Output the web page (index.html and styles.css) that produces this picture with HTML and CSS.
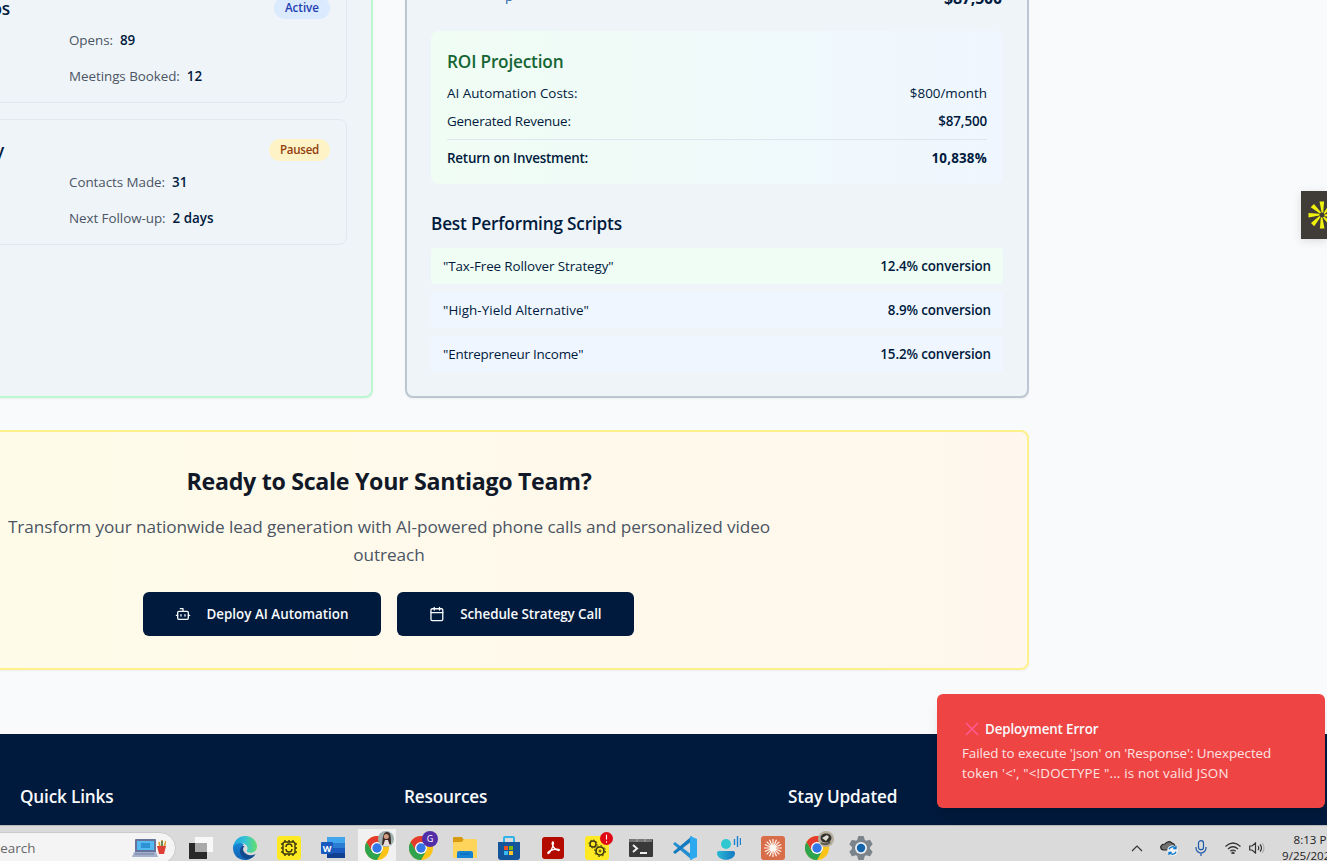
FILE: index.html
```html
<!DOCTYPE html>
<html lang="en">
<head>
<meta charset="utf-8">
<title>Santiago Team</title>
<link rel="stylesheet" href="styles.css">
</head>
<body>
<div class="page">
  <main class="content">
    <div class="columns">
      <section class="card campaigns">
        <article class="campaign">
          <header><h4 class="name-a">os</h4><span class="badge active">Active</span></header>
          <dl><div></div><div><dt>Opens:</dt><dd>89</dd></div><div></div><div><dt>Meetings Booked:</dt><dd>12</dd></div></dl>
        </article>
        <article class="campaign">
          <header><h4 class="name-b">y</h4><span class="badge paused">Paused</span></header>
          <dl><div></div><div><dt>Contacts Made:</dt><dd>31</dd></div><div></div><div><dt>Next Follow-up:</dt><dd>2 days</dd></div></dl>
        </article>
      </section>
      <section class="card revenue">
        <div class="pipeline"><span>p</span><b>$87,500</b></div>
        <div class="roi">
          <h3>ROI Projection</h3>
          <div class="line"><span>AI Automation Costs:</span><span>$800/month</span></div>
          <div class="line"><span class="snug">Generated Revenue:</span><span class="semi">$87,500</span></div>
          <div class="line total"><span class="semi snug">Return on Investment:</span><b class="roi-value">10,838%</b></div>
        </div>
        <h3 class="scripts-title">Best Performing Scripts</h3>
        <div class="scripts">
          <div class="script green"><span>"Tax-Free Rollover Strategy"</span><span class="semi">12.4% conversion</span></div>
          <div class="script blue"><span class="loose">"High-Yield Alternative"</span><span class="semi">8.9% conversion</span></div>
          <div class="script blue"><span class="snug">"Entrepreneur Income"</span><span class="semi">15.2% conversion</span></div>
        </div>
      </section>
    </div>
    <section class="cta">
      <h2>Ready to Scale Your Santiago Team?</h2>
      <p>Transform your nationwide lead generation with AI-powered phone calls and personalized video<br>outreach</p>
      <div class="actions">
        <button class="deploy"><svg viewBox="0 0 24 24"><path d="M12 8V4H8"/><rect x="4" y="8" width="16" height="12" rx="2"/><path d="M2 14h2M20 14h2M15 13v2M9 13v2"/></svg><span>Deploy AI Automation</span></button>
        <button class="schedule"><svg viewBox="0 0 24 24"><path d="M8 2v4M16 2v4M3 10h18"/><rect x="3" y="4" width="18" height="18" rx="2"/></svg><span>Schedule Strategy Call</span></button>
      </div>
    </section>
  </main>
  <footer class="footer"><h3>Quick Links</h3><h3>Resources</h3><h3>Stay Updated</h3></footer>
</div>

<aside class="widget"><svg viewBox="0 0 30 30"><g fill="#eef20c"><path id="ray" d="M12.500 1.500h4.600L16.200 12.500h-1.600z"/><use href="#ray" transform="rotate(45 15 15)"/><use href="#ray" transform="rotate(90 15 15)"/><use href="#ray" transform="rotate(135 15 15)"/><use href="#ray" transform="rotate(180 15 15)"/><use href="#ray" transform="rotate(225 15 15)"/><use href="#ray" transform="rotate(270 15 15)"/><use href="#ray" transform="rotate(315 15 15)"/></g></svg></aside>

<div class="toast">
  <div class="toast-title"><svg viewBox="0 0 14 14"><path d="M1 1l12 12M13 1L1 13"/></svg><span>Deployment Error</span></div>
  <p><span class="first">Failed to execute 'json' on 'Response': Unexpected</span><br><span class="second">token '&lt;', "&lt;!DOCTYPE "... is not valid JSON</span></p>
</div>

<nav class="taskbar">
  <div class="search"><span>Search</span>
    <svg viewBox="0 0 34 20"><path d="M4 1h19q1 0 1 1v12H3V2q0-1 1-1z" fill="#66739a"/><path d="M5 3h17v9H5z" fill="#52b9f2"/><path d="M9 5h9v5H9z" fill="#2d91d4"/><path d="M2 14h22l2 5H0z" fill="#a5b0cb"/><path d="M3 16h19" stroke="#7380a4"/><path d="M28 9l-1-5M30 9V2M32 9l2-6" stroke="#e0a12b" stroke-width="1.7"/><path d="M30 8V3" stroke="#3e7b57" stroke-width="1.5"/><path d="M25 8h9l-2 8h-5z" fill="#dd3f37"/></svg>
  </div>
  <div class="apps">
    <i><svg viewBox="0 0 24 24"><path d="M0 7h18v16H0z" fill="#292929"/><path d="M6 1h18v15H6z" fill="#f8f8f8"/><path d="M6 7h12v9H6z" fill="#a9a9a9"/></svg></i>
    <i><svg viewBox="0 0 24 24"><defs><linearGradient id="edge-top"><stop stop-color="#1fa3e4"/><stop offset=".5" stop-color="#35c3d5"/><stop offset="1" stop-color="#66e06a"/></linearGradient><linearGradient id="edge-low" x2="0" y2="1"><stop stop-color="#1a86d6"/><stop offset="1" stop-color="#0f63b5"/></linearGradient></defs><path d="M0 12C0 5 6 6 11 8c-3 3-3 8 0 11 3 3 8 3 11-.500C20 22 16 24 12 24 5 24 0 19 0 12z" fill="url(#edge-low)"/><path d="M9 10c-4 4-2 11 4 13 4 0 8-2 9.500-5-5 2.500-10 1-12-3-.800-2-.500-3 1-5z" fill="#134a8e"/><path d="M.2 11C1 4.500 6 0 12 0c7 0 12 5 12 10.500 0 5-5 7.500-9.500 5.500-1.300-.800 0-1.500 0-3.800C14.500 7 5 4.500.2 11z" fill="url(#edge-top)"/></svg></i>
    <i><svg viewBox="0 0 24 24"><rect width="24" height="24" rx="3" fill="#ffe923"/><g fill="none" stroke="#39370e" stroke-width="1.400"><rect x="6" y="6" width="12" height="12" rx="2"/><path d="M8 4v2M12 4v2M16 4v2M8 18v2M12 18v2M16 18v2M4 8h2M4 12h2M4 16h2M18 8h2M18 12h2M18 16h2"/><path d="M9 11a3 3 0 0 1 6 0M15 13a3 3 0 0 1-6 0"/></g></svg></i>
    <i><svg viewBox="0 0 24 24"><path d="M6 1h18v6H6z" fill="#41a5ee"/><path d="M6 7h18v5H6z" fill="#2b7cd3"/><path d="M6 12h18v5H6z" fill="#185abd"/><path d="M6 17h18v5H6z" fill="#103f91"/><rect y="6" width="12" height="12" rx="1" fill="#185abd"/><text x="6" y="15.500" class="word-letter">W</text></svg></i>
    <i class="current"><svg viewBox="0 0 24 24"><g id="chrome"><circle cx="12" cy="12" r="12" fill="#fbc417"/><path d="M12 6h10.400A12 12 0 0 0 1.600 6l5.200 9z" fill="#e33b2e"/><path d="M1.600 6A12 12 0 0 0 12 24l5.200-9L12 18l-5.200-3z" fill="#2fa34d"/><circle cx="12" cy="12" r="6" fill="#fff"/><circle cx="12" cy="12" r="4.700" fill="#3478e8"/></g></svg>
      <svg class="avatar" viewBox="0 0 16 16"><circle cx="8" cy="8" r="8" fill="#9fb0ae"/><path d="M4 14C5 6 5 1 9 1s4 5 4 12z" fill="#3c2925"/><circle cx="8.300" cy="5.500" r="2.500" fill="#d39d82"/><path d="M5 15l2-6h3l2 6z" fill="#e7dcda"/></svg></i>
    <i><svg viewBox="0 0 24 24"><use href="#chrome"/></svg><svg class="avatar" viewBox="0 0 16 16"><circle cx="8" cy="8" r="8" fill="#512da8"/><text x="8" y="11.200" class="avatar-letter">G</text></svg></i>
    <i><svg viewBox="0 0 24 24"><path d="M0 2q0-1 1-1h8l2 3-2 3H0z" fill="#d89a11"/><path d="M1 6h8l2-3h12l1 1v18H0V7z" fill="#ffd45a"/><path d="M4 22v-5q0-2 2-2h12q2 0 2 2v5z" fill="#1583d3"/><path d="M7 18h10" stroke="#0962aa"/></svg></i>
    <i><svg viewBox="0 0 24 24"><path d="M7 7V2q0-1 1-1h8q1 0 1 1v5" fill="none" stroke="#2eb2e8" stroke-width="2"/><path d="M1 6h22v15q0 3-3 3H4q-3 0-3-3z" fill="#14549b"/><path d="M7 10h4v4H7z" fill="#f25022"/><path d="M12 10h4v4h-4z" fill="#7fba00"/><path d="M7 15h4v4H7z" fill="#39b8f3"/><path d="M12 15h4v4h-4z" fill="#ffc629"/></svg></i>
    <i><svg viewBox="0 0 24 24"><rect x="1" y="1" width="22" height="22" rx="3" fill="#b30b00"/><path d="M11.500 6c-1.500 3 3 8.500 6 8.500 2.500-.500-.500-2-5-1-3 .700-6.500 2.500-5.500 4 2 .500 5-7 5.500-10 0-1.500-.300-2-1-1.500z" fill="none" stroke="#fff" stroke-width="1.300"/></svg></i>
    <i><svg viewBox="0 0 24 24"><rect width="24" height="24" rx="3" fill="#ffe923"/><g fill="none" stroke="#3b3911"><circle cx="8" cy="8" r="3" stroke-width="1.400"/><circle cx="8" cy="8" r="4" stroke-dasharray="1.500 1.600"/><circle cx="15" cy="15" r="4" stroke-width="1.700"/><circle cx="15" cy="15" r="5.400" stroke-dasharray="2 2.200"/><circle cx="15" cy="15" r="1"/></g></svg><svg class="alert" viewBox="0 0 14 14"><circle cx="7" cy="7" r="7" fill="#df0814"/><path d="M7 3v5M7 10v1.500" stroke="#fff" stroke-width="1.200"/></svg></i>
    <i><svg viewBox="0 0 24 24"><path d="M1 3h22q1 0 1 1v16q0 1-1 1H1q-1 0-1-1V4q0-1 1-1z" fill="#393939"/><path d="M1 3h22v3H0V4z" fill="#777"/><path d="M8 3v3M16 3v3" stroke="#aaa"/><path d="M4 9l4 3.500L4 16" fill="none" stroke="#eee" stroke-width="2"/><path d="M11 17h7" stroke="#eee" stroke-width="2"/></svg></i>
    <i><svg viewBox="0 0 24 24"><path d="M0 8l2-2 17 13v5z" fill="#258fd1"/><path d="M0 16l2 2L19 5V0z" fill="#147bc0"/><path d="M17 0l7 3v18l-7 3z" fill="#2ca9ef"/></svg></i>
    <i><svg viewBox="0 0 24 24"><defs><linearGradient id="body-fill"><stop stop-color="#2bb9d4"/><stop offset="1" stop-color="#1578c4"/></linearGradient></defs><circle cx="9" cy="8" r="5" fill="#31c7d1"/><path d="M2 15h14q2 0 2 2c0 9-18 9-18 0q0-2 2-2z" fill="url(#body-fill)"/><path d="M17.500 3v6M20.500 0v11M23.500 2v7" stroke="#1b83d4" stroke-width="1.400"/></svg></i>
    <i><svg viewBox="0 0 24 24"><rect width="24" height="24" rx="3" fill="#d96c49"/><path d="M12 3v18M3 12h18M5.600 5.600l12.800 12.800M18.400 5.600L5.600 18.400M8.500 3.700l7 16.600M3.700 8.500l16.600 7M15.500 3.700l-7 16.600M20.300 8.500l-16.600 7" stroke="#fff7f1" stroke-width="1.200"/></svg></i>
    <i><svg viewBox="0 0 24 24"><use href="#chrome"/></svg><svg class="avatar" viewBox="0 0 16 16"><circle cx="8" cy="8" r="8" fill="#b5ad9c"/><ellipse cx="8" cy="7" rx="5.500" ry="4.500" fill="#302f2c"/><path d="M4 7l5-3 2 2-3 4z" fill="#dedbd0"/><path d="M3 12q5 3 9-1" stroke="#5d574c" stroke-width="2" fill="none"/></svg></i>
    <i><svg viewBox="0 0 24 24"><g fill="#7c848b"><circle cx="12" cy="12" r="9"/><g id="teeth"><path d="M9 1q0-1 1-1h4q1 0 1 1l1 4H8z"/><path d="M9 23q0 1 1 1h4q1 0 1-1l1-4H8z"/></g><use href="#teeth" transform="rotate(60 12 12)"/><use href="#teeth" transform="rotate(120 12 12)"/></g><circle cx="12" cy="12" r="6" fill="#e8edf1"/><circle cx="12" cy="12" r="4.200" fill="#1463ad"/></svg></i>
  </div>
  <div class="tray">
    <svg class="chevron" viewBox="0 0 12 8"><path d="M1 7l5-5 5 5"/></svg>
    <svg class="cloud" viewBox="0 0 18 16"><path d="M3 10Q0 9 1 6q1-2 4-2 3-4 7-1 3 1 3 4v3z" fill="#727272" stroke="#222"/><circle cx="12.500" cy="10.500" r="5.300" fill="#f2f2f2" stroke="none"/><path d="M9 9.300a3.700 3.700 0 0 1 6.500-1M16 11.700a3.700 3.700 0 0 1-6.500 1M16 6v2.700h-2.700M9 15v-2.700h2.700" fill="none" stroke="#0876cc" stroke-width="1.300"/></svg>
    <svg class="mic" viewBox="0 0 12 16"><rect x="3.500" y=".700" width="5" height="9" rx="2.500"/><path d="M1 7v1a5 5 0 0 0 10 0V7M6 13v3"/></svg>
    <svg class="wifi" viewBox="0 0 16 12"><path d="M.5 4.500q7.500-7 15 0M3 7q5-4.500 10 0M5.300 9.200q2.700-2.300 5.400 0"/><circle cx="8" cy="11" r="1"/></svg>
    <svg class="sound" viewBox="0 0 16 12"><path d="M.7 4H3l3.500-3v10L3 8H.7zM9 4q1.500 2 0 4M11 2.500q3 3.500 0 7"/><path d="M13 1q4 5 0 10" opacity=".25"/></svg>
    <div class="clock"><span>8:13 PM</span><span>9/25/2025</span></div>
  </div>
</nav>
</body>
</html>
```

FILE: styles.css
```css
* { box-sizing: border-box; }
body {
  margin: 0;
  width: 1327px;
  height: 861px;
  position: relative;
  overflow: hidden;
  background: #f9fafc;
  color: #001a3d;
  font: 13.4px/20px "Open Sans", "Noto Sans", sans-serif;
}
h2, h3, h4, p, dl, dd { margin: 0; }
h3, h4 { height: 28px; padding-top: 1px; font-size: 17.2px; line-height: 28px; font-weight: 600; letter-spacing: -.18px; }
b { font-weight: 700; }
.semi { font-weight: 600; letter-spacing: -.12px; }
.snug { letter-spacing: -.2px; }
.loose { letter-spacing: .05px; }
.roi-value { letter-spacing: .2px; }
.page { height: 825px; overflow: hidden; }
.content { width: 1280px; margin-left: -251px; padding-bottom: 64px; }
.columns { display: grid; grid-template-columns: 1fr 1fr; gap: 32px; height: 446px; margin-top: -48px; }
.card { height: 446px; padding: 24px; border: 2px solid #bbf7d0; border-radius: 8px; background: #eff4f9; box-shadow: 0 1px 2px rgb(0 0 0 / 5%); }
.campaigns { display: flex; flex-direction: column; gap: 16px; padding-top: 23px; }
.revenue { border-color: #bcc7d3; }
.campaign { height: 126px; padding: 16px; border: 1px solid #e2e8f0; border-radius: 8px; }
.campaign header { display: flex; justify-content: space-between; align-items: center; height: 28px; margin-bottom: 8px; }
.campaign h4 { text-align: right; }
.name-a { width: 218px; }
.name-b { width: 212px; }
.campaign dl { display: grid; grid-template-columns: 1fr 1fr; gap: 16px; grid-auto-rows: 20px; }
.campaign dl div { display: flex; gap: 7px; }
dt { color: #4b5563; letter-spacing: -.05px; }
dd { font-weight: 600; }
.badge { height: 22px; padding: 1px 11px; border-radius: 11px; font-size: 11.6px; font-weight: 600; }
.active { background: #dbeafe; color: #1e40af; }
.paused { background: #fef3c7; color: #92400e; letter-spacing: -.3px; }
.pipeline { display: flex; justify-content: space-between; height: 28px; margin-top: 6px; margin-bottom: 19px; padding: 0 1px 0 74px; line-height: 28px; }
.pipeline span { color: #1d5fa8; line-height: 24px; }
.pipeline b { font-size: 16px; letter-spacing: -.2px; }
.roi { height: 153px; padding: 16px; border-radius: 8px; background: linear-gradient(90deg, #f0fdf4, #eff6ff); }
.roi h3 { color: #166534; margin-bottom: 8px; }
.line { display: flex; justify-content: space-between; margin-bottom: 8px; }
.total { padding-top: 8px; border-top: 1px solid #dde5ee; }
.scripts-title { margin: 25px 0 11px; }
.scripts { display: grid; gap: 8px; }
.script { display: flex; justify-content: space-between; height: 36px; padding: 8px 12px; border-radius: 4px; letter-spacing: -.1px; }
.green { background: #f0fdf4; }
.blue { background: #eff6ff; }
.cta { height: 240px; margin-top: 32px; padding: 32px; border: 2px solid #fef08a; border-radius: 8px; background: linear-gradient(90deg, #fefce8, #fff7ed); text-align: center; box-shadow: 0 1px 2px rgb(0 0 0 / 5%); }
.cta h2 { height: 32px; margin-bottom: 17px; padding-top: 1px; font-size: 23.2px; line-height: 32px; font-weight: 700; letter-spacing: -.3px; color: #111827; }
.cta p { margin-bottom: 23px; font-size: 17.2px; line-height: 28px; letter-spacing: -.08px; color: #4b5563; }
.actions { display: flex; justify-content: center; gap: 16px; padding-right: 2px; }
.actions button { display: flex; align-items: center; gap: 16px; height: 44px; padding: 0 32px; border: 0; border-radius: 6px; background: #001a3d; color: #f8fafc; font: 600 13.4px/20px "Open Sans", sans-serif; white-space: nowrap; }
.actions svg { width: 16px; height: 16px; fill: none; stroke: currentColor; stroke-width: 2; stroke-linecap: round; stroke-linejoin: round; }
.actions .deploy { width: 238px; }
.actions .schedule { width: 237px; letter-spacing: -.08px; }
.footer { height: 91px; padding: 48px 0 0 20px; display: grid; grid-template-columns: 384px 384px 384px; background: #001a3d; color: #f8fafc; }
.widget { position: absolute; right: 0; top: 191px; width: 26px; height: 48px; padding: 9px 0 0 6px; background: #403c38; overflow: hidden; box-shadow: 0 2px 10px rgb(0 0 0 / 12%); }
.widget svg { width: 30px; height: 30px; display: block; }
.toast { position: absolute; left: 937px; top: 694px; width: 388px; height: 114px; padding: 25px; border-radius: 6px; background: #ef4444; color: #fce4e4; box-shadow: 0 10px 15px -3px rgb(0 0 0 / 10%), 0 4px 6px -4px rgb(0 0 0 / 10%); }
.toast-title { display: flex; align-items: center; gap: 6px; padding-left: 3px; margin-bottom: 4px; color: #f8fafc; font-weight: 600; letter-spacing: -.15px; }
.toast-title svg { width: 14px; height: 14px; stroke: #ff5a93; stroke-width: 1.5; }
.first { letter-spacing: -.07px; }
.second { letter-spacing: .16px; }
.taskbar { display: flex; height: 36px; border-top: 1px solid #bababa; background: #dadada; overflow: hidden; }
.search { flex: none; display: flex; align-items: center; justify-content: space-between; width: 196px; height: 32px; margin: 6px 3px 0 -20px; padding: 0 9px 0 12px; border: 1px solid #cacaca; border-radius: 16px; background: #f4f4f4; color: #666; }
.search svg { width: 34px; height: 20px; }
.apps { display: flex; }
.apps i { position: relative; flex: none; width: 44px; height: 36px; padding: 10px 0 0 10px; }
.apps i > svg:first-child { display: block; width: 24px; height: 24px; }
.apps .current { background: linear-gradient(#f1f1f1, #f1f1f1) 3px 3px / 38px 40px no-repeat; }
.apps .avatar { position: absolute; left: 23px; top: 5px; width: 16px; height: 16px; }
.apps .alert { position: absolute; left: 25px; top: 6px; width: 13px; height: 13px; }
.word-letter { font: 700 9px "Open Sans", sans-serif; fill: #fff; stroke: none; text-anchor: middle; }
.avatar-letter { font: 400 9px "Open Sans", sans-serif; fill: #fff; text-anchor: middle; }
.tray { flex: none; display: flex; align-items: center; margin-left: auto; width: 196px; padding-top: 9px; }
.tray svg { flex: none; fill: none; stroke: #333; stroke-width: 1.2; }
.chevron { width: 12px; height: 8px; margin-right: 17px; }
.cloud { width: 18px; height: 16px; margin-right: 17px; }
.tray .mic { width: 12px; height: 16px; stroke: #1c59aa; margin-right: 18px; }
.wifi { width: 16px; height: 12px; margin-right: 8px; }
.sound { width: 16px; height: 12px; margin-right: 17px; }
.clock { flex: none; display: grid; justify-items: end; font-size: 11.6px; line-height: 16px; color: #222; white-space: nowrap; }
```
